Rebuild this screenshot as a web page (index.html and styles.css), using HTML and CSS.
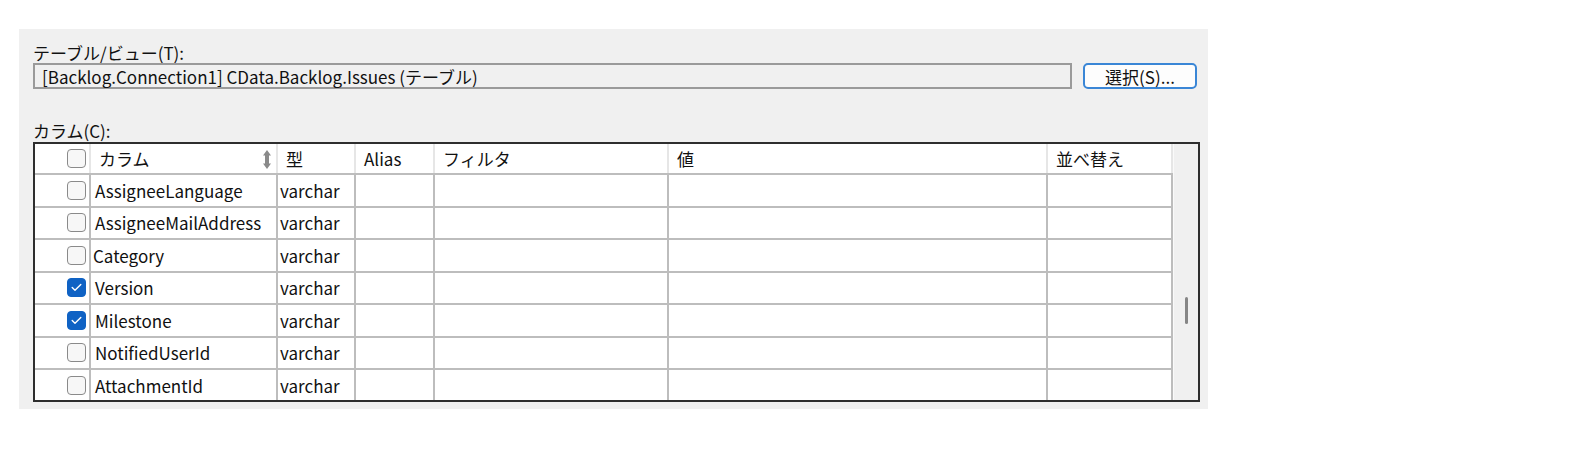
FILE: index.html
```html
<!DOCTYPE html>
<html lang="ja">
<head>
<meta charset="utf-8">
<title>テーブル/ビュー</title>
<link rel="stylesheet" href="styles.css">
</head>
<body>
<div class="panel">
  <div class="label">テーブル/ビュー(T):</div>
  <div class="source-row">
    <div class="textbox">[Backlog.Connection1] CData.Backlog.Issues (テーブル)</div>
    <button class="btn">選択(S)...</button>
  </div>
  <div class="label label-cols">カラム(C):</div>
  <div class="grid">
    <div class="grid-main">
      <div class="row head">
        <div class="cell chk"><span class="box"></span></div>
        <div class="cell name">カラム
          <svg class="sort" width="8" height="19" viewBox="0 0 8 19"><path d="M4 0 L8 5.5 L6 5.5 L6 13.5 L8 13.5 L4 19 L0 13.5 L2 13.5 L2 5.5 L0 5.5 Z" fill="#8a8a8a"/></svg>
        </div>
        <div class="cell">型</div>
        <div class="cell">Alias</div>
        <div class="cell">フィルタ</div>
        <div class="cell">値</div>
        <div class="cell">並べ替え</div>
      </div>
      <div class="row">
        <div class="cell chk"><span class="box"></span></div>
        <div class="cell name">AssigneeLanguage</div>
        <div class="cell">varchar</div>
        <div class="cell"></div><div class="cell"></div><div class="cell"></div><div class="cell"></div>
      </div>
      <div class="row">
        <div class="cell chk"><span class="box"></span></div>
        <div class="cell name">AssigneeMailAddress</div>
        <div class="cell">varchar</div>
        <div class="cell"></div><div class="cell"></div><div class="cell"></div><div class="cell"></div>
      </div>
      <div class="row">
        <div class="cell chk"><span class="box"></span></div>
        <div class="cell name tight">Category</div>
        <div class="cell">varchar</div>
        <div class="cell"></div><div class="cell"></div><div class="cell"></div><div class="cell"></div>
      </div>
      <div class="row">
        <div class="cell chk"><span class="box checked"><svg width="11" height="9" viewBox="0 0 11 9"><path d="M1.2 4.6 L4 7.3 L9.8 1.5" fill="none" stroke="#fff" stroke-width="1.4" stroke-linecap="round" stroke-linejoin="round"/></svg></span></div>
        <div class="cell name">Version</div>
        <div class="cell">varchar</div>
        <div class="cell"></div><div class="cell"></div><div class="cell"></div><div class="cell"></div>
      </div>
      <div class="row">
        <div class="cell chk"><span class="box checked"><svg width="11" height="9" viewBox="0 0 11 9"><path d="M1.2 4.6 L4 7.3 L9.8 1.5" fill="none" stroke="#fff" stroke-width="1.4" stroke-linecap="round" stroke-linejoin="round"/></svg></span></div>
        <div class="cell name">Milestone</div>
        <div class="cell">varchar</div>
        <div class="cell"></div><div class="cell"></div><div class="cell"></div><div class="cell"></div>
      </div>
      <div class="row">
        <div class="cell chk"><span class="box"></span></div>
        <div class="cell name">NotifiedUserId</div>
        <div class="cell">varchar</div>
        <div class="cell"></div><div class="cell"></div><div class="cell"></div><div class="cell"></div>
      </div>
      <div class="row">
        <div class="cell chk"><span class="box"></span></div>
        <div class="cell name">AttachmentId</div>
        <div class="cell">varchar</div>
        <div class="cell"></div><div class="cell"></div><div class="cell"></div><div class="cell"></div>
      </div>
    </div>
    <div class="vscroll"><div class="thumb"></div></div>
  </div>
</div>
</body>
</html>
```

FILE: styles.css
```css
html, body {
  margin: 0;
  padding: 0;
  background: #ffffff;
}
body {
  font-family: "Noto Sans CJK JP", "Noto Sans", sans-serif;
  font-size: 17px;
  color: #111;
}
.panel {
  margin: 29px 0 0 19px;
  width: 1189px;
  height: 380px;
  box-sizing: border-box;
  background: #f0f0f0;
  padding: 14px 8px 7px 14px;
  display: flex;
  flex-direction: column;
}
.label {
  height: 20px;
  line-height: 20px;
  white-space: nowrap;
}
.label-cols {
  margin-top: 32px;
}
.source-row {
  margin-top: 0;
  display: flex;
  gap: 11px;
  height: 26px;
}
.textbox {
  width: 1039px;
  box-sizing: border-box;
  border: 2px solid #9a9a9a;
  background: #f0f0f0;
  padding-left: 7px;
  line-height: 24px;
  white-space: nowrap;
}
.btn {
  width: 114px;
  height: 26px;
  box-sizing: border-box;
  border: 2px solid #3a86d6;
  border-radius: 5px;
  background: #fdfdfd;
  font: inherit;
  color: #111;
  padding: 1px 0 0;
  line-height: 20px;
}
.grid {
  margin-top: 1px;
  width: 1167px;
  height: 260px;
  box-sizing: border-box;
  border: 2px solid #2e2e2e;
  display: flex;
  background: #fff;
}
.grid-main {
  width: 1138px;
  height: 256px;
  overflow: hidden;
}
.row {
  display: grid;
  grid-template-columns: 56px 187px 78px 79px 234px 379px 125px;
  height: 32.5px;
  box-sizing: border-box;
  border-bottom: 2px solid #bdbdbd;
}
.row.head {
  height: 31px;
}
.cell {
  border-right: 2px solid #bdbdbd;
  padding-left: 2px;
  padding-top: 1px;
  display: flex;
  align-items: center;
  white-space: nowrap;
  overflow: hidden;
  line-height: 20px;
}
.cell.name {
  padding-left: 4px;
}
.cell.name.tight {
  padding-left: 2px;
}
.head .cell {
  border-right-color: #e6e6e6;
  padding-left: 8px;
}
.head .cell.name {
  justify-content: space-between;
  padding-right: 5px;
}
.head .cell.chk, .cell.chk {
  justify-content: flex-end;
  padding: 0 3px 0 0;
  border-right-color: #bdbdbd;
}
.head .cell.chk {
  border-right-color: #e6e6e6;
}
.box {
  width: 19px;
  height: 19px;
  box-sizing: border-box;
  border: 1.5px solid #8a8a8a;
  border-radius: 4px;
  background: #f7f7f7;
  display: flex;
  align-items: center;
  justify-content: center;
}
.box.checked {
  background: #0f62c4;
  border-color: #0f62c4;
}
.vscroll {
  flex: 1;
  background: #f0f0f0;
  border-left: 1px solid #fafafa;
  display: flex;
  flex-direction: column;
  align-items: flex-start;
}
.thumb {
  margin-top: 153px;
  margin-left: 11px;
  width: 3px;
  height: 27px;
  border-radius: 2px;
  background: #868686;
}
```
